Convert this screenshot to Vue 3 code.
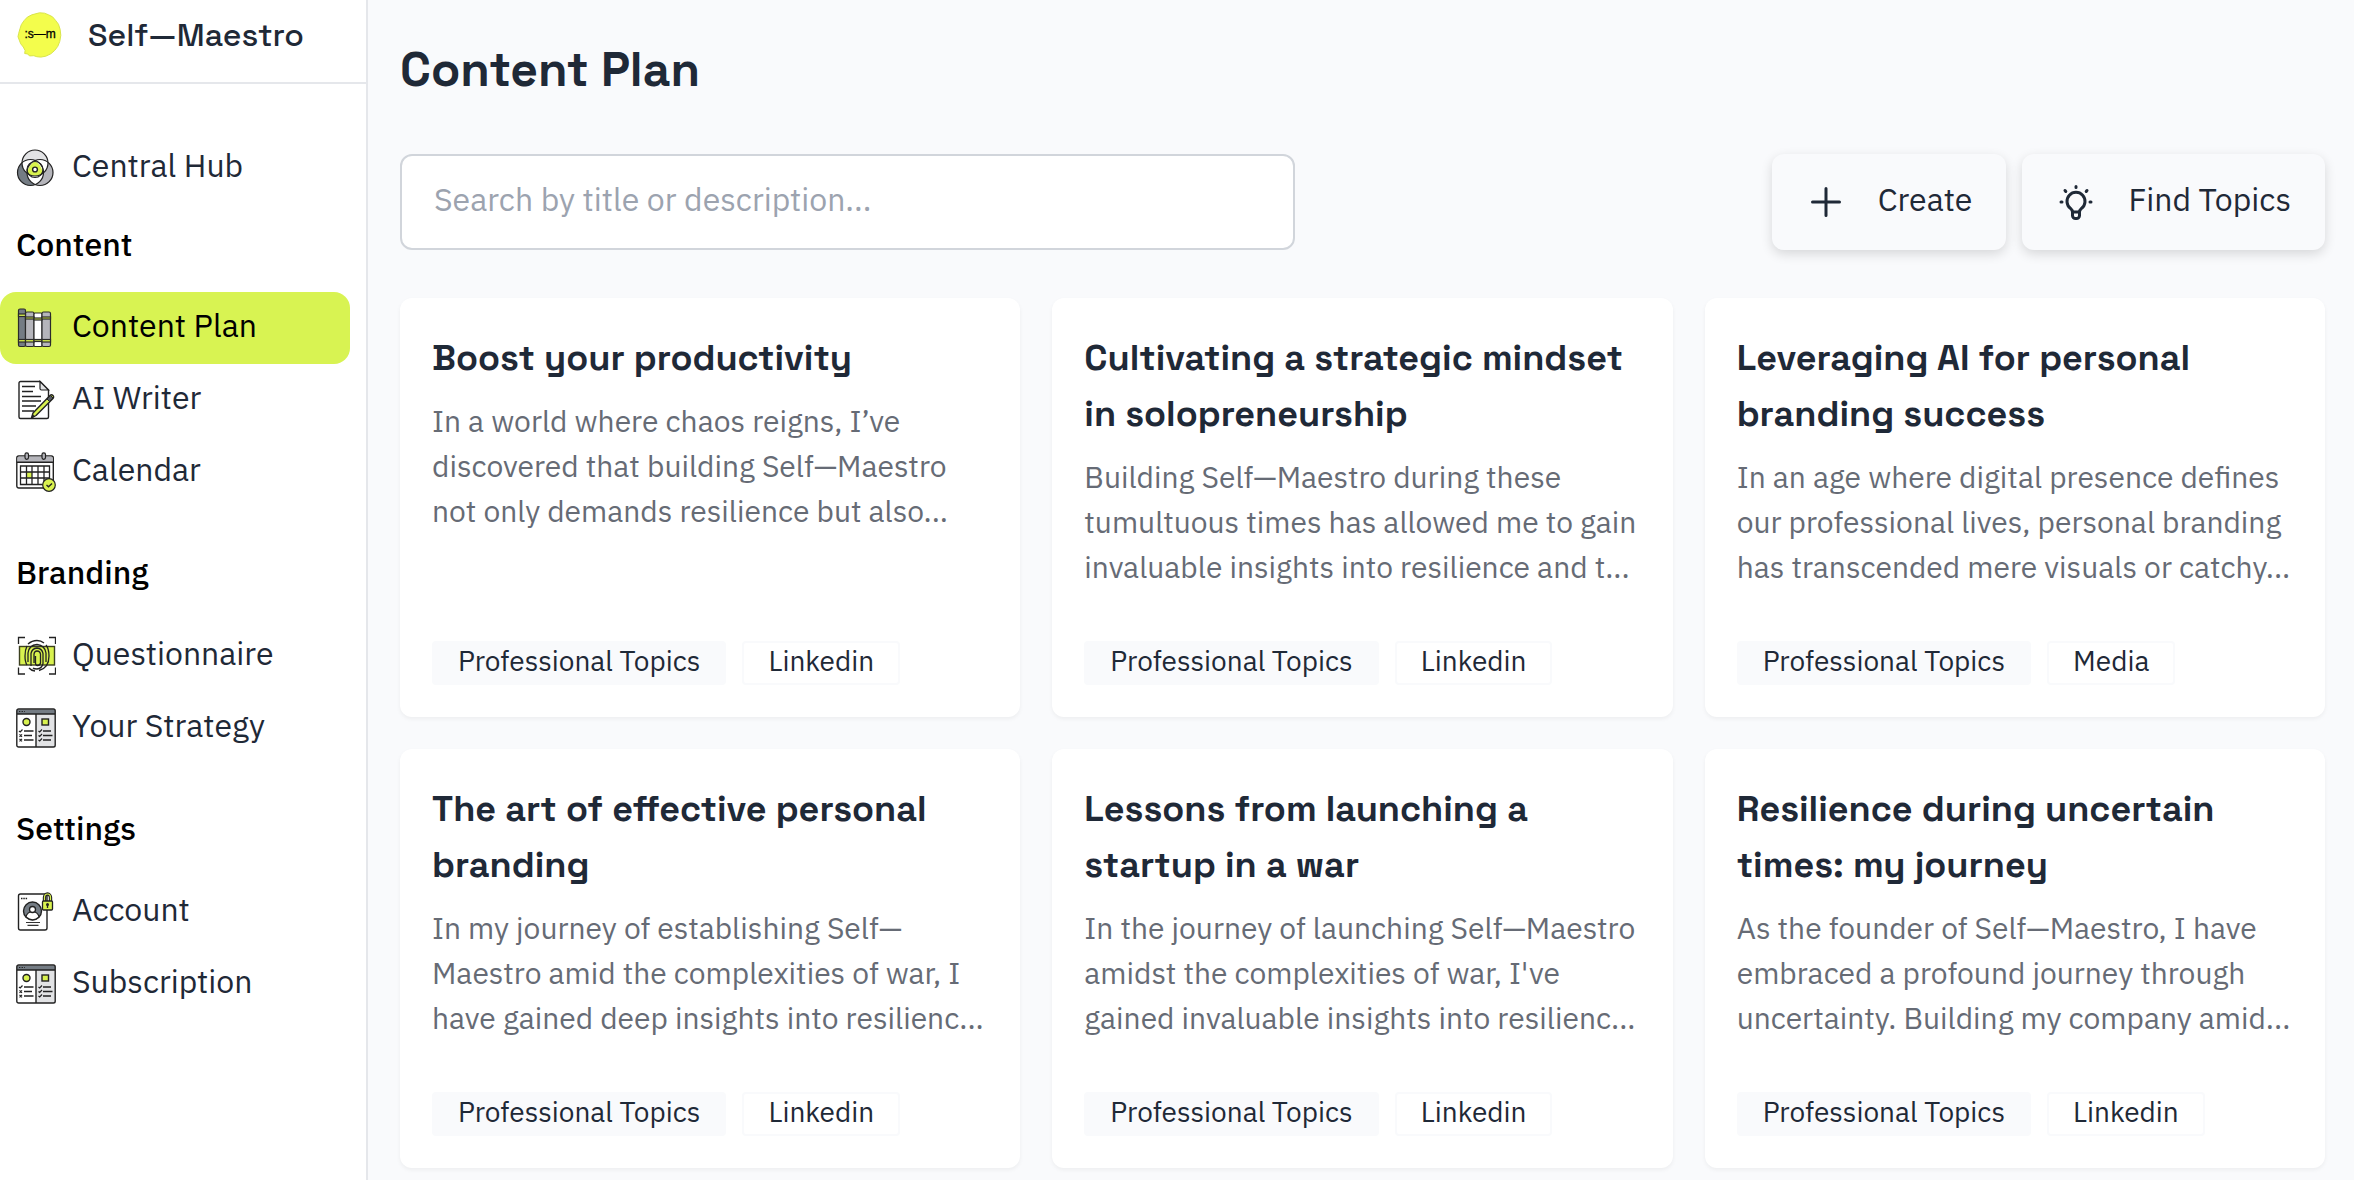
<script setup>
import { ref } from 'vue'

const query = ref('')

const groups = [
  { title: '', items: [{ label: 'Central Hub', icon: 'hub' }] },
  {
    title: 'Content',
    items: [
      { label: 'Content Plan', icon: 'books', active: true },
      { label: 'AI Writer', icon: 'writer' },
      { label: 'Calendar', icon: 'calendar' },
    ],
  },
  {
    title: 'Branding',
    items: [
      { label: 'Questionnaire', icon: 'finger' },
      { label: 'Your Strategy', icon: 'board' },
    ],
  },
  {
    title: 'Settings',
    items: [
      { label: 'Account', icon: 'account' },
      { label: 'Subscription', icon: 'board' },
    ],
  },
]

const cards = [
  {
    title: 'Boost your productivity',
    text: 'In a world where chaos reigns, I’ve\ndiscovered that building Self—Maestro\nnot only demands resilience but also...',
    tag: 'Linkedin',
  },
  {
    title: 'Cultivating a strategic mindset\nin solopreneurship',
    text: 'Building Self—Maestro during these\ntumultuous times has allowed me to gain\ninvaluable insights into resilience and t...',
    tag: 'Linkedin',
  },
  {
    title: 'Leveraging AI for personal\nbranding success',
    text: 'In an age where digital presence defines\nour professional lives, personal branding\nhas transcended mere visuals or catchy...',
    tag: 'Media',
  },
  {
    title: 'The art of effective personal\nbranding',
    text: 'In my journey of establishing Self—\nMaestro amid the complexities of war, I\nhave gained deep insights into resilienc...',
    tag: 'Linkedin',
  },
  {
    title: 'Lessons from launching a\nstartup in a war',
    text: "In the journey of launching Self—Maestro\namidst the complexities of war, I've\ngained invaluable insights into resilienc...",
    tag: 'Linkedin',
  },
  {
    title: 'Resilience during uncertain\ntimes: my journey',
    text: 'As the founder of Self—Maestro, I have\nembraced a profound journey through\nuncertainty. Building my company amid...',
    tag: 'Linkedin',
  },
]
</script>

<template>
  <div class="app">
    <aside class="sidebar">
      <a class="brand" href="#">
        <svg class="logo" viewBox="0 0 44 46" aria-hidden="true">
          <path
            d="M22 .8l5 .4 4 1.6 4 2 3 3.500 3 4 1.600 5 .7 6-1 6-2 5-3 4-4 3.500-5 2.400-5 .9-4-.4-3-1-4 .2-2.500-2-2.600-.4.4-3-1.800-3.500-2.600-3.200-1.400-3.600-1.300-3.500.6-3 1.400-5 1.300-4 2.700-4 3.400-3.600 4.500-2.300z"
            fill="#f3fd4c" stroke="#d9e44a" stroke-width="1" stroke-linejoin="round"
          />
          <text x="7" y="26" font-size="12" fill="#000" stroke="#000" stroke-width=".3">:s—m</text>
        </svg>
        <span>Self—Maestro</span>
      </a>

      <nav class="nav">
        <section v-for="g in groups" :key="g.title" class="group">
          <h2 v-if="g.title">{{ g.title }}</h2>
          <a v-for="i in g.items" :key="i.label" href="#" class="item" :class="{ active: i.active }">
            <svg v-if="i.icon === 'hub'" class="icon" viewBox="0 0 40 40" aria-hidden="true">
              <defs>
                <clipPath id="c-top"><circle cx="19" cy="15" r="13" /></clipPath>
                <clipPath id="c-left"><circle cx="14.500" cy="24.500" r="13" /></clipPath>
              </defs>
              <circle cx="19" cy="15" r="13" fill="#e2e3e5" />
              <circle cx="14.500" cy="24.500" r="13" fill="#747c84" />
              <circle cx="24" cy="24.500" r="13" fill="#b5b5bb" />
              <g fill="#fff">
                <circle cx="14.500" cy="24.500" r="13" clip-path="url(#c-top)" />
                <circle cx="24" cy="24.500" r="13" clip-path="url(#c-top)" />
                <circle cx="24" cy="24.500" r="13" clip-path="url(#c-left)" />
              </g>
              <path d="M19 13q7 4 8 13-8 4-16 0 1-9 8-13z" fill="#d9f24f" />
              <g fill="none" stroke="#222" stroke-width="1.200">
                <circle cx="19" cy="15" r="13" />
                <circle cx="14.500" cy="24.500" r="13" />
                <circle cx="24" cy="24.500" r="13" />
                <circle cx="19" cy="21.500" r="8" />
              </g>
              <circle cx="19" cy="21.500" r="2.400" fill="#fff" stroke="#222" stroke-width="1.400" />
            </svg>

            <svg v-else-if="i.icon === 'books'" class="icon" viewBox="0 0 40 40" aria-hidden="true">
              <g stroke="#2b2b2b" stroke-width="1.200">
                <rect x="2.500" y="1" width="7" height="37.500" rx="1.500" fill="#747c84" />
                <rect x="9.500" y="4" width="8.500" height="34.500" rx="1.500" fill="#b5b5bb" />
                <rect x="18" y="5" width="8" height="33.500" rx="1" fill="#fff" />
                <rect x="26" y="4" width="8.500" height="34.500" rx="1.500" fill="#b5b5bb" />
                <rect x="2.500" y="6" width="7" height="2.500" fill="#d9f24f" />
                <rect x="9.500" y="9" width="8.500" height="2" fill="#d9f24f" />
                <rect x="18" y="10" width="8" height="2" fill="#d9f24f" />
                <rect x="26" y="9" width="8.500" height="2" fill="#d9f24f" />
                <rect x="2.500" y="31.500" width="7" height="2.500" fill="#d9f24f" />
                <rect x="9.500" y="31.500" width="8.500" height="2.500" fill="#d9f24f" />
                <rect x="18" y="31.500" width="8" height="2" fill="#b8c850" />
                <rect x="26" y="31.500" width="8.500" height="2.500" fill="#d9f24f" />
              </g>
            </svg>

            <svg v-else-if="i.icon === 'writer'" class="icon" viewBox="0 0 40 40" aria-hidden="true">
              <path d="M4.500 1.500h19.500l8.500 8.500v27a1.500 1.500 0 0 1-1.500 1.500h-26.500a1.500 1.500 0 0 1-1.500-1.500v-34a1.500 1.500 0 0 1 1.500-1.500z" fill="#fff" stroke="#222" stroke-width="1.400" />
              <path d="M24 1.500v7a1.500 1.500 0 0 0 1.500 1.500h7z" fill="#e2e3e5" stroke="#222" stroke-width="1.200" />
              <path d="M6 6.500h13M6 11.500h11M6 16.500h19M6 21h19M6 26h14M6 31h12" stroke="#222" stroke-width="1.400" />
              <path d="M15.500 38l1.500-5 17-17.500a2 2 0 0 1 3 3l-17 17z" fill="#d9f24f" stroke="#222" stroke-width="1.400" stroke-linejoin="round" />
              <path d="M31 19l3.500-3.500 2.500 2.500-3.500 3.500z" fill="#555b60" stroke="#222" />
              <path d="M15 38.500l1.500-4.500 2.500 2.500z" fill="#222" />
            </svg>

            <svg v-else-if="i.icon === 'calendar'" class="icon" viewBox="0 0 40 40" aria-hidden="true">
              <rect x=".8" y="4" width="36.500" height="32" rx="2" fill="#fff" stroke="#222" stroke-width="1.400" />
              <path d="M1.500 10V6a1.500 1.500 0 0 1 1.500-1.500h32a1.500 1.500 0 0 1 1.500 1.500v4z" fill="#b5b5bb" />
              <path d="M.8 10.200h36.500" stroke="#222" stroke-width="1.400" />
              <rect x="9" y=".8" width="3.500" height="6.500" rx="1.700" fill="#b5b5bb" stroke="#222" stroke-width="1.200" />
              <rect x="26" y=".8" width="3.500" height="6.500" rx="1.700" fill="#b5b5bb" stroke="#222" stroke-width="1.200" />
              <rect x="10.500" y="20" width="5.500" height="6" fill="#d9f24f" />
              <path d="M4.500 14h29v18.500h-29zM4.500 20h29M4.500 26h29M10.500 14v18.500M16 14v18.500M22 14v18.500M28 14v18.500" fill="none" stroke="#222" stroke-width="1.300" />
              <circle cx="33" cy="33" r="6.300" fill="#d9f24f" stroke="#222" stroke-width="1.200" />
              <path d="M30.500 33l2 1.800 3.500-3.300" fill="none" stroke="#222" stroke-width="1.400" />
            </svg>

            <svg v-else-if="i.icon === 'finger'" class="icon" viewBox="0 0 40 40" aria-hidden="true">
              <rect x="3.500" y="10.500" width="35" height="18.500" fill="#d9f24f" stroke="#3c4020" stroke-width="1.400" />
              <g fill="none" stroke="#222" stroke-width="1.300">
                <path d="M2.500 8V1.500H9M33 1.500h6.500V8M39.500 31.500V38H33M9 38H2.500v-6.500" />
                <path d="M12 8q4-3.500 9-3.500 4 0 7 2.500M30 9q3 4 3 11 0 12-10 14.500M19 35q-4-.5-6-3M11 29q-2-3-2-9 0-6 2-10" />
                <path d="M12 26V17q1-8 9-8.500 8 1 9 8.500v9M15 30V17.500q1-5 6-5.500 5 .5 6 5.500v10q-1 5-6 5.500-3 0-4-1" />
                <path d="M18 27V18q.5-3 3-3 3 0 3.500 3v9q-.5 2.500-3 2.500-2 0-2-2.500V20" />
              </g>
            </svg>

            <svg v-else-if="i.icon === 'board'" class="icon" viewBox="0 0 40 40" aria-hidden="true">
              <rect x=".8" y="1" width="38.400" height="38" rx="1.800" fill="#fff" />
              <path d="M20 5h19v34H20z" fill="#e2e3e5" />
              <path d="M1 1.500h38V6H1z" fill="#747c84" />
              <rect x=".8" y="1" width="38.400" height="38" rx="1.800" fill="none" stroke="#222" stroke-width="1.400" />
              <path d="M1 6h38M20 6v33" stroke="#222" stroke-width="1.400" />
              <path d="M3 3.500h6" stroke="#222" stroke-width="1.200" stroke-dasharray="1.300 1.300" />
              <circle cx="10.500" cy="14" r="3.500" fill="#d9f24f" stroke="#222" stroke-width="1.400" />
              <rect x="26" y="11" width="6.500" height="6" fill="#d9f24f" stroke="#222" stroke-width="1.400" />
              <path d="M8 23h9.500M8 27.500h8M8 32h9.500M27 23h8M27 27.500h9.500M27 32h8" stroke="#222" stroke-width="1.400" />
              <path d="M3 23l1.200 1L6.500 21.500M3.500 26.300l2.500 2.500M6 26.300l-2.500 2.500M3.500 30.800L6 33.300M6 30.800l-2.500 2.500M22.500 23l1.200 1 2.300-2.500M22.500 27.500l1.200 1L26 26M22.500 32l1.200 1 2.300-2.500" fill="none" stroke="#222" stroke-width="1.200" />
            </svg>

            <svg v-else class="icon" viewBox="0 0 40 40" aria-hidden="true">
              <rect x="2.500" y="2" width="28.500" height="36" rx="2" fill="#fff" stroke="#222" stroke-width="1.400" />
              <path d="M5 6.500h6.500" stroke="#222" stroke-width="1.400" stroke-dasharray="1.500 .8" />
              <circle cx="16.500" cy="19" r="9" fill="#747c84" stroke="#222" stroke-width="1.400" />
              <path d="M10 25q1-5 6.500-5.500Q22 20 23 25q-6 5.500-13 0z" fill="#fff" stroke="#222" stroke-width="1.200" />
              <circle cx="16.500" cy="17.500" r="3" fill="#fff" stroke="#222" stroke-width="1.300" />
              <path d="M10 30.500h14M11.500 33.300h11" stroke="#333" stroke-width="1.200" />
              <path d="M28.500 9V5.500a3 3.500 0 0 1 6 0V9" fill="none" stroke="#222" stroke-width="3.400" />
              <path d="M28.500 9V5.500a3 3.500 0 0 1 6 0V9" fill="none" stroke="#d9f24f" stroke-width="1.200" />
              <rect x="26.500" y="9" width="10" height="9" rx="1" fill="#d9f24f" stroke="#222" stroke-width="1.300" />
              <path d="M31.500 13v3" stroke="#222" stroke-width="1.300" />
              <circle cx="31.500" cy="12.500" r="1.500" fill="#222" />
            </svg>
            <span>{{ i.label }}</span>
          </a>
        </section>
      </nav>
    </aside>

    <main class="main">
      <h1>Content Plan</h1>

      <div class="toolbar">
        <input v-model="query" class="search" type="text" aria-label="Search by title or description" placeholder="Search by title or description..." />
        <div class="actions">
          <button type="button">
            <svg viewBox="0 0 36 36" aria-hidden="true">
              <path d="M18 4.500v27M4.500 18h27" fill="none" stroke="currentColor" stroke-width="3" stroke-linecap="round" />
            </svg>
            <span>Create</span>
          </button>
          <button type="button">
            <svg viewBox="0 0 36 36" aria-hidden="true" fill="none" stroke="currentColor" stroke-width="3" stroke-linecap="round" stroke-linejoin="round">
              <path d="M14.500 28c0-1.500-.8-2.500-2-3.600a9 9 0 1 1 11 0c-1.200 1.100-2 2.100-2 3.600zM14.500 28v3.500a3 3 0 0 0 3 3h1a3 3 0 0 0 3-3V28M18 2.500v1M7 6.500l.8 1M29 6.500l-.8 1M3 18h1M32 18h1" />
            </svg>
            <span>Find Topics</span>
          </button>
        </div>
      </div>

      <div class="cards">
        <article v-for="c in cards" :key="c.title" class="card">
          <h3>{{ c.title }}</h3>
          <p>{{ c.text }}</p>
          <div class="tags">
            <span class="tag filled">Professional Topics</span>
            <span class="tag">{{ c.tag }}</span>
          </div>
        </article>
      </div>
    </main>
  </div>
</template>

<style>
body {
  margin: 0;
  background: #f9fafc;
}
</style>

<style scoped>
* {
  box-sizing: border-box;
}
.app {
  display: flex;
  min-height: 100vh;
  font-family: "IBM Plex Sans", Roboto, "Liberation Sans", sans-serif;
  font-size: 32px;
  color: #1f2937;
}
h1,
h2,
h3,
p {
  margin: 0;
}
a {
  color: inherit;
  text-decoration: none;
}
.sidebar {
  flex: 0 0 368px;
  background: #fff;
  border-right: 2px solid #e5e7eb;
}
.brand {
  display: flex;
  align-items: center;
  gap: 26px;
  height: 84px;
  padding: 0 0 12px 17px;
  border-bottom: 2px solid #e5e7eb;
  font-family: "Space Grotesk", Inter, sans-serif;
  font-weight: 500;
}
.logo {
  width: 45px;
  height: 46px;
  font-family: "Liberation Sans", sans-serif;
}
.nav {
  display: flex;
  flex-direction: column;
  padding: 48px 16px 0 0;
}
.group + .group {
  margin-top: 40px;
}
.group:nth-child(2) {
  margin-top: 16px;
}
.group h2 {
  margin-bottom: 24px;
  padding-left: 16px;
  font-size: 32px;
  line-height: 48px;
  font-weight: 500;
  color: #000;
}
.item {
  display: flex;
  align-items: center;
  gap: 16px;
  height: 72px;
  padding: 0 16px;
  border-radius: 16px;
}
.item span {
  line-height: 48px;
  margin-bottom: 6px;
}
.item.active {
  background: #d8f352;
  color: #000;
}
.icon {
  flex: none;
  width: 40px;
  height: 40px;
}
.main {
  flex: 1;
  min-width: 0;
  padding: 34px 29px 12px 32px;
}
h1 {
  margin-bottom: 48px;
  font-family: "Space Grotesk", Inter, sans-serif;
  font-size: 48px;
  line-height: 72px;
  font-weight: 700;
}
.toolbar {
  display: flex;
  align-items: center;
  justify-content: space-between;
  margin-bottom: 48px;
}
.search {
  flex: 0 0 46.5%;
  height: 96px;
  padding: 0 32px 6px;
  border: 2px solid #d1d5db;
  border-radius: 12px;
  background: #fff;
  font: inherit;
  color: inherit;
}
.search::placeholder {
  color: #9ca3af;
  opacity: 1;
}
.actions {
  display: flex;
  gap: 16px;
}
.actions button {
  display: flex;
  align-items: center;
  gap: 34px;
  height: 96px;
  padding: 0 34px 0 36px;
  border: 0;
  border-radius: 12px;
  background: #f9fafc;
  box-shadow: 0 4px 12px rgba(0, 0, 0, 0.14);
  font: inherit;
  color: inherit;
}
.actions svg {
  width: 36px;
  height: 36px;
}
.actions span {
  margin-bottom: 6px;
}
.cards {
  display: grid;
  grid-template-columns: repeat(3, 1fr);
  gap: 32px;
}
.card {
  display: flex;
  flex-direction: column;
  min-width: 0;
  min-height: 419px;
  padding: 32px;
  border-radius: 12px;
  background: #fff;
  box-shadow: 0 2px 4px rgba(0, 0, 0, 0.05);
}
.card h3 {
  font-family: "Space Grotesk", Inter, sans-serif;
  font-size: 36px;
  line-height: 56px;
  font-weight: 700;
  white-space: pre;
}
.card p {
  margin-top: 12px;
  font-size: 30px;
  line-height: 45px;
  color: #666b75;
  white-space: pre;
}
.tags {
  display: flex;
  gap: 16px;
  margin-top: auto;
}
.tag {
  height: 44px;
  padding: 0 24px;
  border: 2px solid #f9fafc;
  border-radius: 4px;
  font-size: 28px;
  line-height: 36px;
}
.tag.filled {
  background: #f9fafc;
}
</style>
